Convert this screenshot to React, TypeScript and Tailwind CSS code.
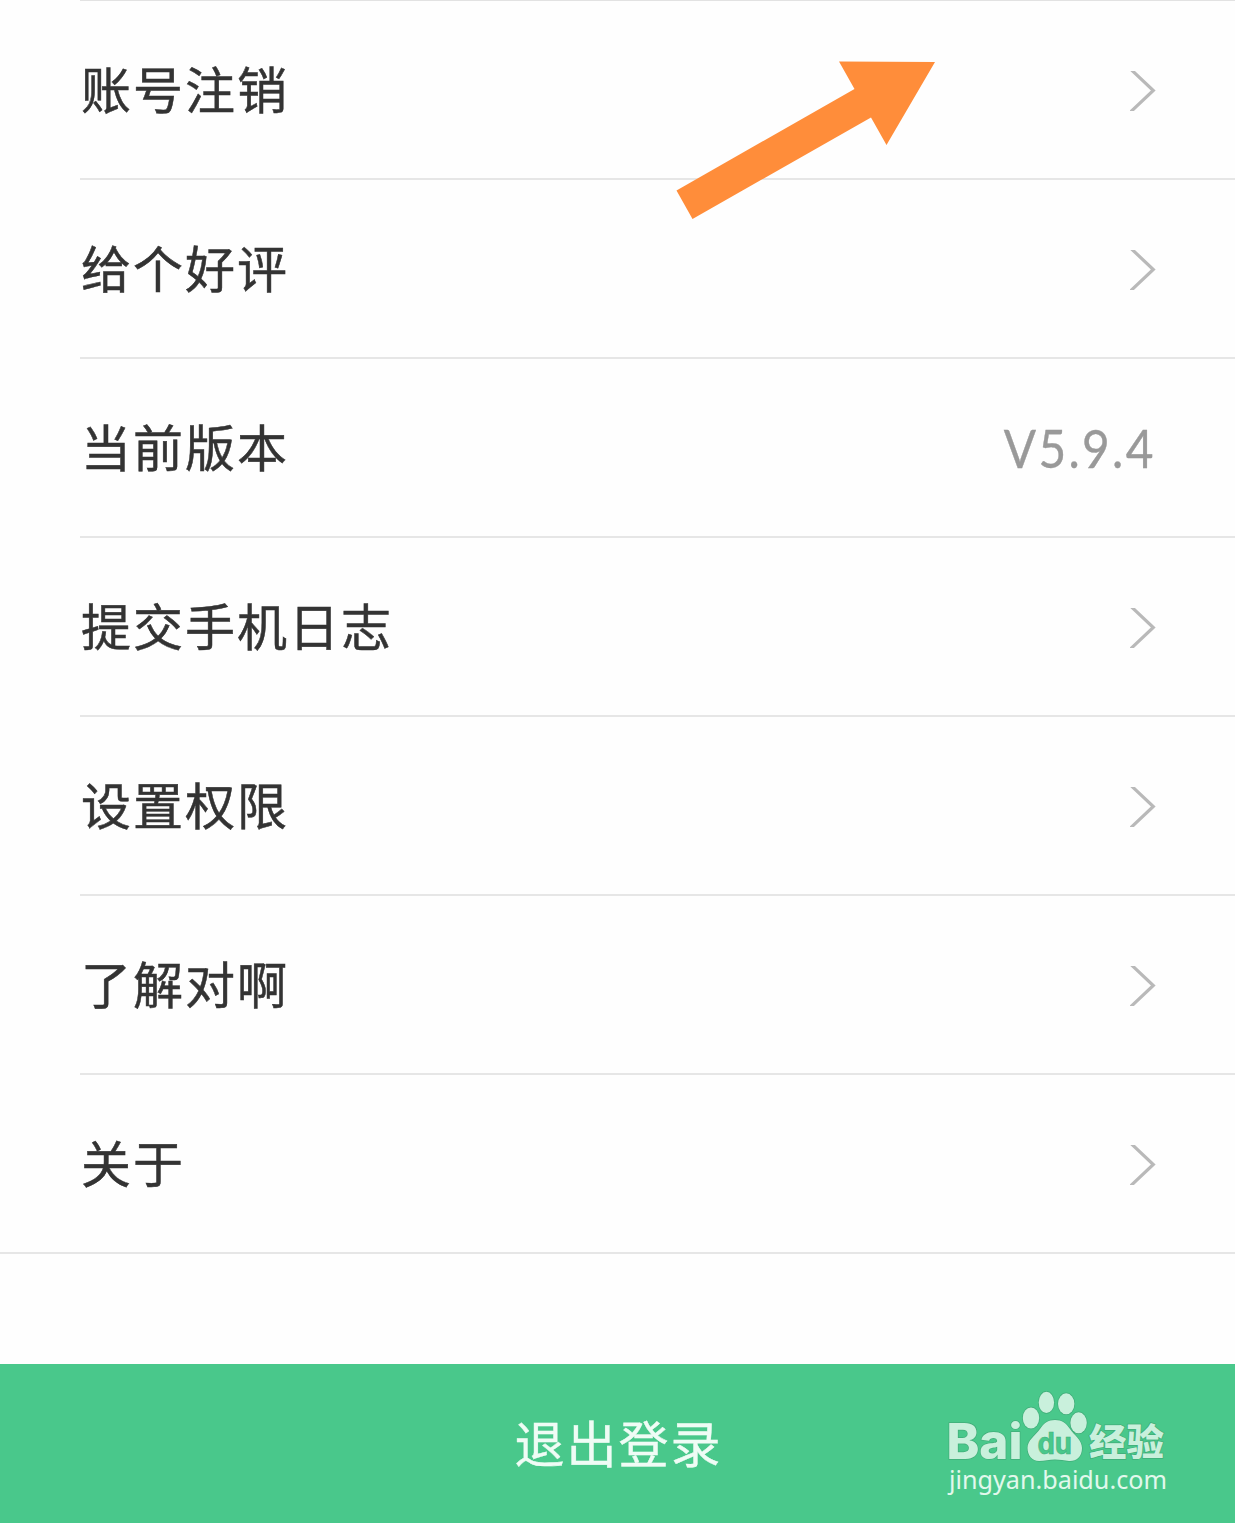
import { clsx } from "clsx";
import React from "react";

interface SettingItem {
  label: string;
  value?: string;
}

const items: SettingItem[] = [
  { label: "账号注销" },
  { label: "给个好评" },
  { label: "当前版本", value: "V5.9.4" },
  { label: "提交手机日志" },
  { label: "设置权限" },
  { label: "了解对啊" },
  { label: "关于" },
];

const Chevron: React.FC = () => (
  <svg width="26" height="40" viewBox="0 0 26 40" fill="none" className="mt-0.5 shrink-0">
    <path d="M0.5 -2 L23.3 19.5 L0.5 41" stroke="#b9b9b9" strokeWidth="3.2" />
  </svg>
);

const SettingRow: React.FC<SettingItem & { last: boolean }> = ({ label, value, last }) => (
  <li
    className={clsx(
      "flex h-[179px] items-center justify-between border-b-2 border-[#e6e6e6] pr-[79px]",
      last ? "pl-[81px]" : "ml-20 pl-px"
    )}
  >
    <span className="pb-[5px] text-[50px] leading-none tracking-[2px] text-[#333333] [-webkit-text-stroke:0.5px_#333333]">
      {label}
    </span>
    {value ? (
      <span className="origin-right scale-x-[0.9] font-['Lato',sans-serif] text-[53px] leading-none tracking-[2.6px] text-[#999999] [-webkit-text-stroke:0.4px_#999999]">
        {value}
      </span>
    ) : (
      <Chevron />
    )}
  </li>
);

const PointerArrow: React.FC = () => (
  <svg
    width="260"
    height="160"
    viewBox="0 0 260 160"
    className="pointer-events-none absolute left-[676px] top-[60px]"
  >
    <path d="M0.5 130.5 L178.5 29 L163 1.5 L259 2 L210.5 85 L195 57.5 L16.5 159 Z" fill="#ff8d3a" />
  </svg>
);

const Watermark: React.FC = () => (
  <svg
    width="250"
    height="125"
    viewBox="0 0 250 125"
    className="pointer-events-none absolute bottom-[18px] right-[55px]"
    fill="#c9f0dc"
  >
    <g stroke="#41ad79" strokeWidth="1.4" paintOrder="stroke">
      <text x="16.5" y="79" fontSize="49" fontWeight="800" fontFamily="Inter" textLength="76" lengthAdjust="spacingAndGlyphs">
        Bai
      </text>
      <ellipse cx="101" cy="38" rx="8.2" ry="10.5" />
      <ellipse cx="116.4" cy="22.4" rx="7.7" ry="10.6" />
      <ellipse cx="136.2" cy="23.8" rx="8.2" ry="10.5" />
      <ellipse cx="148.6" cy="42.8" rx="8.2" ry="10.5" />
      <path d="M125 40 C132 40 136 43 140 49 C144 55 152 60 152 68 C152 77 146 81.5 139 81 C134 80.5 130 79.5 125 79.5 C119 79.5 115 81 109 81 C102 81 97.5 75 97.5 68 C97.5 60 105 56 110 49 C114 43 118 40 125 40 Z" />
      <text x="159" y="76" fontSize="37" fontWeight="900" fontFamily="Noto Sans CJK SC" textLength="75" lengthAdjust="spacingAndGlyphs">
        经验
      </text>
    </g>
    <text
      x="107.5"
      y="73.5"
      fontSize="30"
      fontWeight="700"
      fontFamily="Inter"
      fill="#49c88b"
      stroke="#3fae7a"
      strokeWidth="0.6"
      textLength="34.5"
      lengthAdjust="spacingAndGlyphs"
    >
      du
    </text>
    <text x="19" y="108.5" fontSize="26" fontFamily="Noto Sans" fill="#e2f8ec" textLength="218" lengthAdjust="spacingAndGlyphs">
      jingyan.baidu.com
    </text>
  </svg>
);

export default function App() {
  return (
    <main className="relative flex h-[1523px] w-[1235px] flex-col overflow-hidden bg-[#fefefe] font-['Noto_Sans_CJK_SC',sans-serif]">
      <div className="ml-20 h-px shrink-0 bg-[#e2e2e2]" />
      <ul>
        {items.map((item, index) => (
          <SettingRow key={item.label} {...item} last={index === items.length - 1} />
        ))}
      </ul>
      <button className="mt-auto flex h-[159px] w-full items-center justify-center bg-[#49c88b] pb-[5px] pl-0.5 text-[50px] leading-none tracking-[2px] text-[#effcf5] [-webkit-text-stroke:0.4px_#effcf5]">
        退出登录
      </button>
      <PointerArrow />
      <Watermark />
    </main>
  );
}
